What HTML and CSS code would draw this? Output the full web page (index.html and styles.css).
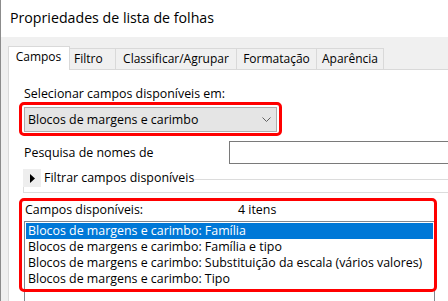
FILE: index.html
```html
<!DOCTYPE html>
<html lang="pt">
<head>
<meta charset="utf-8">
<title>Propriedades de lista de folhas</title>
<link rel="stylesheet" href="styles.css">
</head>
<body>
<div class="window">
  <div class="titlebar">Propriedades de lista de folhas</div>
  <div class="dialog">
    <div class="tabs">
      <div class="tab active">Campos</div>
      <div class="tab tab-filtro">Filtro</div>
      <div class="tab tab-class">Classificar/Agrupar</div>
      <div class="tab tab-form">Formatação</div>
      <div class="tab tab-apar">Aparência</div>
    </div>
    <div class="panel">
      <div class="label">Selecionar campos disponíveis em:</div>
      <div class="hl hl-combo">
        <div class="combo">
          <span>Blocos de margens e carimbo</span>
          <svg class="chevron" width="9" height="5" viewBox="0 0 9 5"><polyline points="0.5,0.5 4.5,4.5 8.5,0.5" fill="none" stroke="#606060" stroke-width="1"/></svg>
        </div>
      </div>
      <div class="search-row">
        <span class="search-label">Pesquisa de nomes de</span>
        <div class="input"></div>
      </div>
      <div class="group">
        <div class="group-head">
          <span class="toggle"><svg width="5" height="9" viewBox="0 0 5 9"><polygon points="0,0 5,4.5 0,9" fill="#000"/></svg></span>
          <span class="group-title">Filtrar campos disponíveis</span>
          <span class="group-line"></span>
        </div>
        <div class="group-body"></div>
      </div>
      <div class="hl hl-list">
        <div class="avail"><span class="avail-label">Campos disponíveis:</span><span>4 itens</span></div>
        <div class="listbox">
          <div class="row sel">Blocos de margens e carimbo: Família</div>
          <div class="row">Blocos de margens e carimbo: Família e tipo</div>
          <div class="row">Blocos de margens e carimbo: Substituição da escala (vários valores)</div>
          <div class="row">Blocos de margens e carimbo: Tipo</div>
        </div>
      </div>
    </div>
  </div>
</div>
</body>
</html>
```
FILE: styles.css
```css
html, body {
  margin: 0;
  padding: 0;
}
body {
  width: 448px;
  height: 301px;
  overflow: hidden;
  background: #f0f0f0;
  font-family: "Open Sans", "Noto Sans", sans-serif;
  font-size: 12px;
  color: #000;
}
.window {
  height: 301px;
  border-left: 1px solid #8c8c8c;
  box-sizing: border-box;
  display: flex;
  flex-direction: column;
}
.titlebar {
  height: 37px;
  line-height: 36px;
  background: #fff;
  padding-left: 9px;
  font-size: 14.2px;
  white-space: nowrap;
}
.dialog {
  flex: 1;
  display: flex;
  flex-direction: column;
  padding-top: 9px;
}
.tabs {
  display: flex;
  align-items: flex-end;
  height: 23px;
  padding-left: 7px;
}
.tab {
  box-sizing: border-box;
  height: 21px;
  line-height: 19px;
  border-top: 1px solid #d9d9d9;
  border-right: 1px solid #d9d9d9;
  background: #f0f0f0;
  text-align: center;
  white-space: nowrap;
}
.tab.active {
  position: relative;
  z-index: 1;
  width: 62px;
  height: 24px;
  margin-bottom: -1px;
  line-height: 20px;
  border-left: 1px solid #d9d9d9;
  background: #fff;
  padding-right: 1px;
}
.tab-filtro { width: 46px; text-align: left; padding-left: 4px; }
.tab-class { width: 121px; }
.tab-form { width: 80px; }
.tab-apar { width: 67px; }
.panel {
  flex: 1;
  margin-left: 7px;
  background: #fff;
  border-top: 1px solid #d9d9d9;
  border-left: 1px solid #d9d9d9;
  padding: 16px 0 0 15px;
  overflow: hidden;
  font-size: 12.4px;
}
.label {
  line-height: 15px;
  white-space: nowrap;
}
.hl {
  position: relative;
  margin-left: -5px;
  box-sizing: border-box;
}
.hl::after {
  content: "";
  position: absolute;
  inset: 0;
  border: 3px solid #ff0000;
  border-radius: 5px;
  z-index: 2;
  pointer-events: none;
}
.hl-combo {
  margin-top: 1px;
  width: 263px;
  padding: 5px 5px 4px 5px;
}
.combo {
  box-sizing: border-box;
  height: 25px;
  border: 1px solid #adadad;
  background: #e5e5e5;
  display: flex;
  align-items: center;
  justify-content: space-between;
  padding: 0 5px 0 3px;
  white-space: nowrap;
}
.chevron { display: block; }
.search-row {
  margin-top: 5px;
  display: flex;
  align-items: center;
  height: 23px;
}
.search-label {
  width: 205px;
  flex: none;
  white-space: nowrap;
}
.input {
  flex: none;
  box-sizing: border-box;
  width: 240px;
  height: 23px;
  border: 1px solid #7a7a7a;
  background: #fff;
}
.group {
  margin-top: 5px;
  margin-left: -1px;
}
.group-head {
  display: flex;
  height: 18px;
  align-items: center;
}
.toggle {
  flex: none;
  width: 18px;
  height: 18px;
  background: #eeeeee;
  display: flex;
  align-items: center;
  padding-left: 7px;
  box-sizing: border-box;
}
.toggle svg { display: block; }
.group-title {
  margin-left: 3px;
  white-space: nowrap;
  line-height: 18px;
}
.group-line {
  flex: 1;
  align-self: flex-start;
  margin-top: 10px;
  border-top: 1px solid #dcdcdc;
}
.group-body {
  height: 5px;
  border-left: 1px solid #dcdcdc;
  border-bottom: 1px solid #dcdcdc;
}
.hl-list {
  margin-top: 5px;
  width: 418px;
  height: 94px;
  padding: 4px 3px 0 5px;
}
.avail {
  display: flex;
  line-height: 15px;
  padding-left: 1px;
  white-space: nowrap;
}
.avail-label {
  width: 213px;
  flex: none;
}
.listbox {
  margin-top: 4px;
  box-sizing: border-box;
  width: 411px;
  height: 110px;
  border: 1px solid #828790;
  padding: 1px 1px 0 1px;
  background: #fff;
}
.row {
  height: 16px;
  line-height: 16px;
  padding-left: 2px;
  white-space: nowrap;
}
.row.sel {
  background: #0078d7;
  color: #fff;
}
```
